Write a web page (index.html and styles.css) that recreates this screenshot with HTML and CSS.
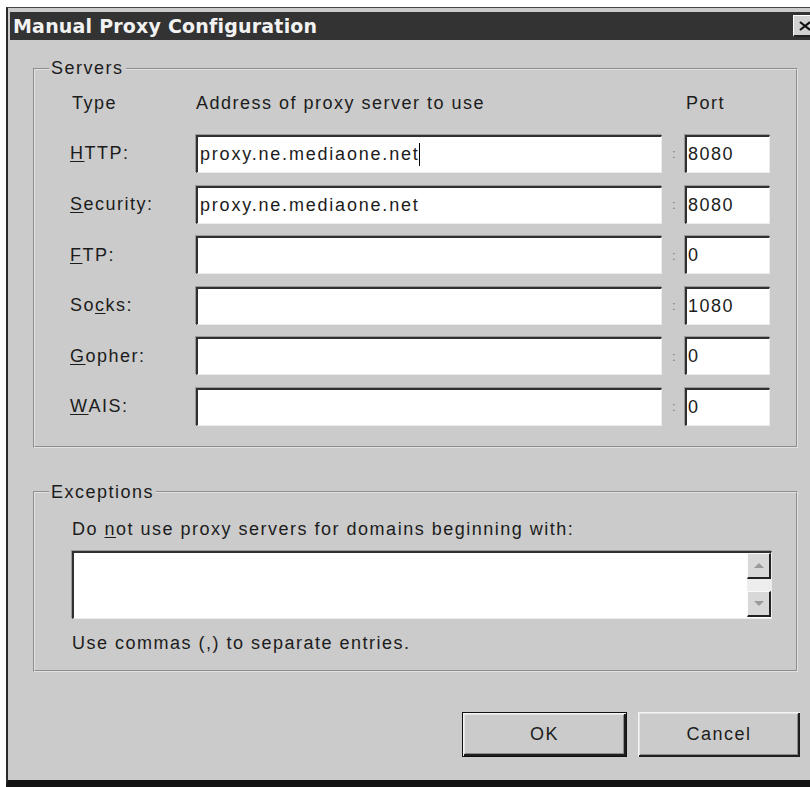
FILE: index.html
```html
<!DOCTYPE html>
<html lang="en">
<head>
<meta charset="utf-8">
<title>Manual Proxy Configuration</title>
<link rel="stylesheet" href="styles.css">
</head>
<body>
<div class="window">
  <div class="titlebar">
    <span class="title">Manual Proxy Configuration</span>
    <span class="close">
      <svg width="12" height="10" viewBox="0 0 12 10"><path d="M1 1 L11 9 M11 1 L1 9" stroke="#111" stroke-width="2.2" fill="none"/></svg>
    </span>
  </div>
  <div class="dialog">
    <fieldset class="group">
      <legend>Servers</legend>
      <div class="server-grid">
        <span class="head head-type">Type</span>
        <span class="head">Address of proxy server to use</span>
        <span class="head"></span>
        <span class="head head-port">Port</span>

        <span class="label"><u>H</u>TTP:</span>
        <div class="field">proxy.ne.mediaone.net<span class="caret"></span></div>
        <span class="colon">:</span>
        <div class="field port">8080</div>

        <span class="label"><u>S</u>ecurity:</span>
        <div class="field">proxy.ne.mediaone.net</div>
        <span class="colon">:</span>
        <div class="field port">8080</div>

        <span class="label"><u>F</u>TP:</span>
        <div class="field"></div>
        <span class="colon">:</span>
        <div class="field port">0</div>

        <span class="label">So<u>c</u>ks:</span>
        <div class="field"></div>
        <span class="colon">:</span>
        <div class="field port">1080</div>

        <span class="label"><u>G</u>opher:</span>
        <div class="field"></div>
        <span class="colon">:</span>
        <div class="field port">0</div>

        <span class="label"><u>W</u>AIS:</span>
        <div class="field"></div>
        <span class="colon">:</span>
        <div class="field port">0</div>
      </div>
    </fieldset>

    <fieldset class="group exceptions">
      <legend>Exceptions</legend>
      <div class="exceptions-body">
        <p class="line">Do <u>n</u>ot use proxy servers for domains beginning with:</p>
        <div class="textbox">
          <div class="scroll">
            <span class="sbtn"><span class="arrow up"></span></span>
            <span class="track"></span>
            <span class="sbtn"><span class="arrow down"></span></span>
          </div>
        </div>
        <p class="line hint">Use commas (,) to separate entries.</p>
      </div>
    </fieldset>

    <div class="buttons">
      <button class="btn default" type="button">OK</button>
      <button class="btn" type="button">Cancel</button>
    </div>
  </div>
</div>
</body>
</html>
```

FILE: styles.css
```css
html, body {
  margin: 0;
  padding: 0;
  background: #ffffff;
  overflow: hidden;
}

body {
  font-family: "Liberation Sans", Arial, sans-serif;
  font-size: 18px;
  line-height: 21px;
  color: #1c1c1c;
}

/* dialog frame */
.window {
  margin: 7px 0 0 6px;
  width: 816px;
  height: 780px;
  box-sizing: border-box;
  background: #cbcbcb;
  border-top: 1px solid #444;
  border-left: 2px solid #2a2a2a;
  border-bottom: 7px solid #141414;
  padding: 4px 0 0 2px;
  display: flex;
  flex-direction: column;
}

.titlebar {
  height: 28px;
  flex: none;
  background: #333333;
  display: flex;
  align-items: center;
  justify-content: space-between;
  padding-left: 3px;
}

.title {
  font-family: "DejaVu Sans", Verdana, sans-serif;
  font-weight: bold;
  font-size: 19px;
  color: #f2f2f2;
  letter-spacing: 0.2px;
}

.close {
  width: 24px;
  height: 22px;
  margin-right: 5px;
  box-sizing: border-box;
  background: #d2d2d2;
  border-top: 1px solid #fff;
  border-left: 1px solid #fff;
  border-right: 2px solid #222;
  border-bottom: 2px solid #222;
  display: flex;
  align-items: center;
  justify-content: center;
}

.dialog {
  flex: 1;
  display: flex;
  flex-direction: column;
  padding-left: 23px;
  letter-spacing: 1.5px;
}

/* group boxes */
.group {
  margin: 18px 0 0 0;
  padding: 0;
  width: 765px;
  box-sizing: border-box;
  min-width: 0;
  border: 2px groove #e2e2e2;
}

.group legend {
  margin-left: 14px;
  padding: 0 2px;
  font-size: 18px;
  line-height: 21px;
}

.exceptions {
  margin-top: 34px;
}

/* servers table */
.server-grid {
  display: grid;
  grid-template-columns: 126px 466px 23px 85px;
  grid-template-rows: 29.4px repeat(6, 38px);
  row-gap: 12.6px;
  padding: 14px 0 20px 35px;
}

.head {
  height: 21px;
}

.head-type { padding-left: 2px; }
.head-port { padding-left: 1px; }

.label {
  display: flex;
  align-items: center;
}

.label u,
.line u {
  text-decoration-thickness: 1px;
  text-underline-offset: 2px;
}

.field {
  box-sizing: border-box;
  height: 38px;
  background: #ffffff;
  border-top: 2px solid #303030;
  border-left: 2px solid #303030;
  border-right: 1px solid #ececec;
  border-bottom: 1px solid #ececec;
  box-shadow: -1px -1px 0 #9a9a9a;
  padding-left: 2px;
  display: flex;
  align-items: center;
  white-space: nowrap;
  letter-spacing: 1.8px;
}

.field.port {
  padding-left: 1px;
  letter-spacing: 1.5px;
}

.caret {
  display: inline-block;
  width: 1px;
  height: 23px;
  background: #000;
  margin-left: -1px;
}

.colon {
  display: flex;
  align-items: center;
  justify-content: center;
  font-size: 13px;
  color: #7a7a7a;
  padding-left: 2px;
}

/* exceptions */
.exceptions-body {
  padding: 16px 0 16px 37px;
}

.line {
  margin: 0;
}

.textbox {
  box-sizing: border-box;
  width: 700px;
  height: 68px;
  margin: 11px 0 14px 0;
  background: #ffffff;
  border-top: 2px solid #303030;
  border-left: 2px solid #303030;
  border-right: 1px solid #ececec;
  border-bottom: 1px solid #ececec;
  box-shadow: -1px -1px 0 #9a9a9a;
  display: flex;
  justify-content: flex-end;
}

.scroll {
  width: 24px;
  display: flex;
  flex-direction: column;
  padding: 0 0 1px 0;
}

.sbtn {
  height: 26px;
  box-sizing: border-box;
  background: #d8d8d8;
  border-top: 1px solid #fafafa;
  border-left: 1px solid #fafafa;
  border-right: 2px solid #222;
  border-bottom: 2px solid #222;
  display: flex;
  align-items: center;
  justify-content: center;
}

.track {
  flex: 1;
  background: #ededed;
}

.arrow {
  width: 0;
  height: 0;
  border-left: 5px solid transparent;
  border-right: 5px solid transparent;
}

.arrow.up { border-bottom: 5px solid #9a9a9a; }
.arrow.down { border-top: 5px solid #9a9a9a; }

/* command buttons */
.buttons {
  width: 767px;
  margin-top: 40px;
  display: flex;
  justify-content: flex-end;
  gap: 11px;
}

.btn {
  width: 162px;
  height: 45px;
  font-family: "Liberation Sans", Arial, sans-serif;
  font-size: 18px;
  letter-spacing: 1.5px;
  color: #1c1c1c;
  background: #cbcbcb;
  border: none;
  padding: 0;
  box-shadow: inset 1px 1px 0 #f4f4f4, inset -2px -2px 0 #1e1e1e, inset 2px 2px 0 #e4e4e4, inset -3px -3px 0 #8c8c8c;
}

.btn.default {
  width: 165px;
  border: 1px solid #111;
}
```
